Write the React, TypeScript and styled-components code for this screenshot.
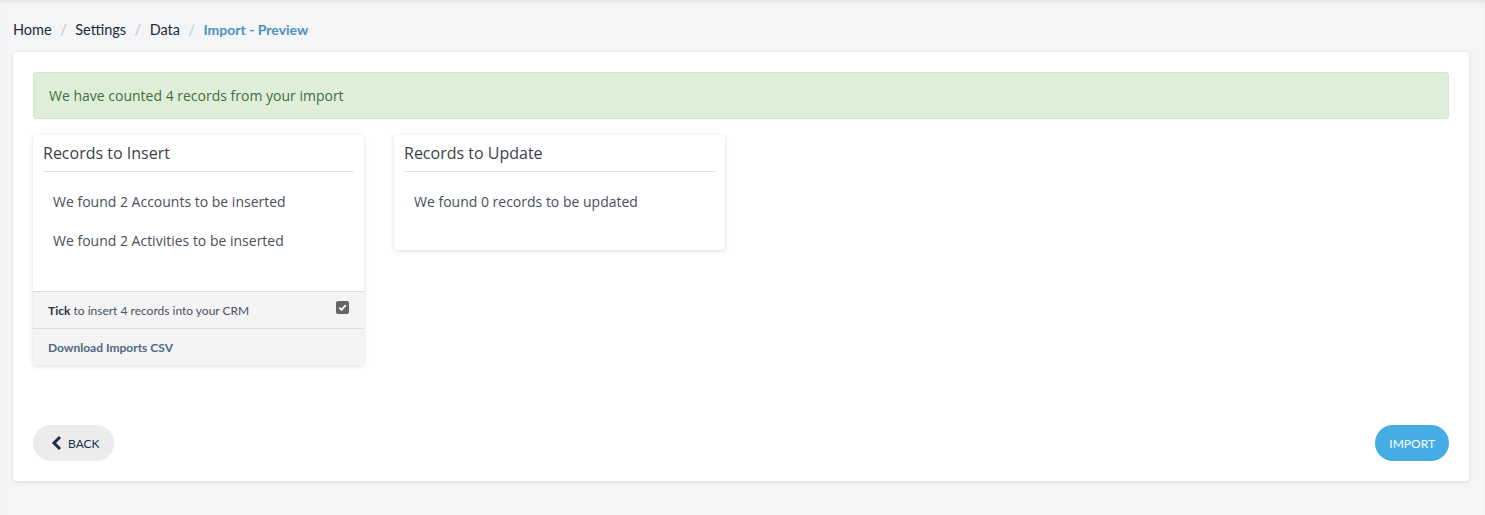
import * as React from "react";
import styled, { createGlobalStyle } from "styled-components";

const Global = createGlobalStyle`
  html, body {
    margin: 0;
    padding: 0;
    background: #f4f5f7;
    font-family: "Open Sans", "Liberation Sans", sans-serif;
  }
  * { box-sizing: border-box; }
`;

const Page = styled.div`
  min-height: 515px;
  background: #f4f5f7;
  box-shadow: inset 0 4px 4px -2px rgba(0, 0, 0, 0.08);
  padding: 20px 16px 20px 13px;
`;

const Crumbs = styled.nav`
  display: flex;
  align-items: baseline;
  height: 20px;
  font-family: Lato, "Liberation Sans", sans-serif;
  font-size: 14.5px;
  line-height: 20px;
  color: #222b3a;
  margin-bottom: 12px;
`;

const Crumb = styled.span<{ $active?: boolean }>`
  color: ${p => (p.$active ? "#4d8fc4" : "#222b3a")};
  font-weight: ${p => (p.$active ? 700 : 400)};
  font-size: ${p => (p.$active ? "14px" : "inherit")};
`;

const Sep = styled.span`
  color: #c4c8cc;
  margin: 0 8.5px;
`;

const Panel = styled.div`
  background: #fff;
  border-radius: 4px;
  box-shadow: 0 1px 4px rgba(0, 0, 0, 0.12);
  padding: 20px;
  height: 429px;
  display: flex;
  flex-direction: column;
`;

const Alert = styled.div`
  background: #dfeed8;
  border: 1px solid #d3e8c3;
  border-radius: 3px;
  color: #3f6f3f;
  font-size: 14px;
  line-height: 20px;
  padding: 13px 15px;
  height: 47px;
`;

const Cards = styled.div`
  display: flex;
  align-items: flex-start;
  gap: 30px;
  margin-top: 16px;
`;

const Card = styled.div`
  width: 331px;
  background: #fff;
  border-radius: 4px;
  box-shadow: 0 1px 5px rgba(0, 0, 0, 0.14);
  display: flex;
  flex-direction: column;
`;

const CardHead = styled.h3`
  margin: 0 10px;
  padding: 7px 0 7px;
  font-size: 16px;
  font-weight: 400;
  line-height: 22px;
  color: #3a3f4a;
  border-bottom: 1px solid #dde2e8;
`;

const CardBody = styled.div<{ $pad: number }>`
  padding: 20px 20px ${p => p.$pad}px;
  display: flex;
  flex-direction: column;
  gap: 19px;
`;

const Line = styled.div`
  font-size: 14px;
  line-height: 20px;
  color: #4a4f5a;
`;

const FootRow = styled.div`
  display: flex;
  align-items: center;
  justify-content: space-between;
  height: 37px;
  padding: 0 15px;
  background: #f4f4f4;
  border-top: 1px solid #dcdcdc;
  font-family: Lato, "Liberation Sans", sans-serif;
  font-size: 12px;
  color: #4a5360;
  &:last-child {
    border-radius: 0 0 4px 4px;
  }
`;

const Strong = styled.b`
  color: #2d3440;
`;

const Link = styled.a`
  font-weight: 700;
  color: #4e6587;
  text-decoration: none;
`;

const Check = styled.span`
  width: 13px;
  height: 13px;
  border-radius: 2px;
  background: #666;
  display: inline-flex;
  align-items: center;
  justify-content: center;
  margin-top: -6px;
`;

const Actions = styled.div`
  margin-top: auto;
  display: flex;
  justify-content: space-between;
  align-items: center;
`;

const Pill = styled.button<{ $primary?: boolean }>`
  height: 36px;
  border: none;
  border-radius: 18px;
  padding: ${p => (p.$primary ? "0 14px" : "0 14px 0 18px")};
  display: inline-flex;
  align-items: center;
  gap: 6px;
  font-family: Lato, "Liberation Sans", sans-serif;
  font-size: 12px;
  background: ${p => (p.$primary ? "#45ade3" : "#ececec")};
  color: ${p => (p.$primary ? "#fff" : "#1f2d4d")};
  cursor: pointer;
`;

export default function App() {
  return (
    <>
      <Global />
      <Page>
        <Crumbs>
          <Crumb>Home</Crumb>
          <Sep>/</Sep>
          <Crumb>Settings</Crumb>
          <Sep>/</Sep>
          <Crumb>Data</Crumb>
          <Sep>/</Sep>
          <Crumb $active>Import - Preview</Crumb>
        </Crumbs>
        <Panel>
          <Alert>We have counted 4 records from your import</Alert>
          <Cards>
            <Card>
              <CardHead>Records to Insert</CardHead>
              <CardBody $pad={40}>
                <Line>We found 2 Accounts to be inserted</Line>
                <Line>We found 2 Activities to be inserted</Line>
              </CardBody>
              <FootRow>
                <span>
                  <Strong>Tick</Strong> to insert 4 records into your CRM
                </span>
                <Check>
                  <svg width="9" height="9" viewBox="0 0 10 10">
                    <path d="M1.5 5.2 L4 7.6 L8.6 2.4" fill="none" stroke="#fff" strokeWidth="2" />
                  </svg>
                </Check>
              </FootRow>
              <FootRow>
                <Link href="#">Download Imports CSV</Link>
              </FootRow>
            </Card>
            <Card>
              <CardHead>Records to Update</CardHead>
              <CardBody $pad={38}>
                <Line>We found 0 records to be updated</Line>
              </CardBody>
            </Card>
          </Cards>
          <Actions>
            <Pill>
              <svg width="11" height="16" viewBox="0 0 11 16">
                <path d="M9 2 L3 8 L9 14" fill="none" stroke="#1f2d4d" strokeWidth="3" />
              </svg>
              BACK
            </Pill>
            <Pill $primary>IMPORT</Pill>
          </Actions>
        </Panel>
      </Page>
    </>
  );
}
